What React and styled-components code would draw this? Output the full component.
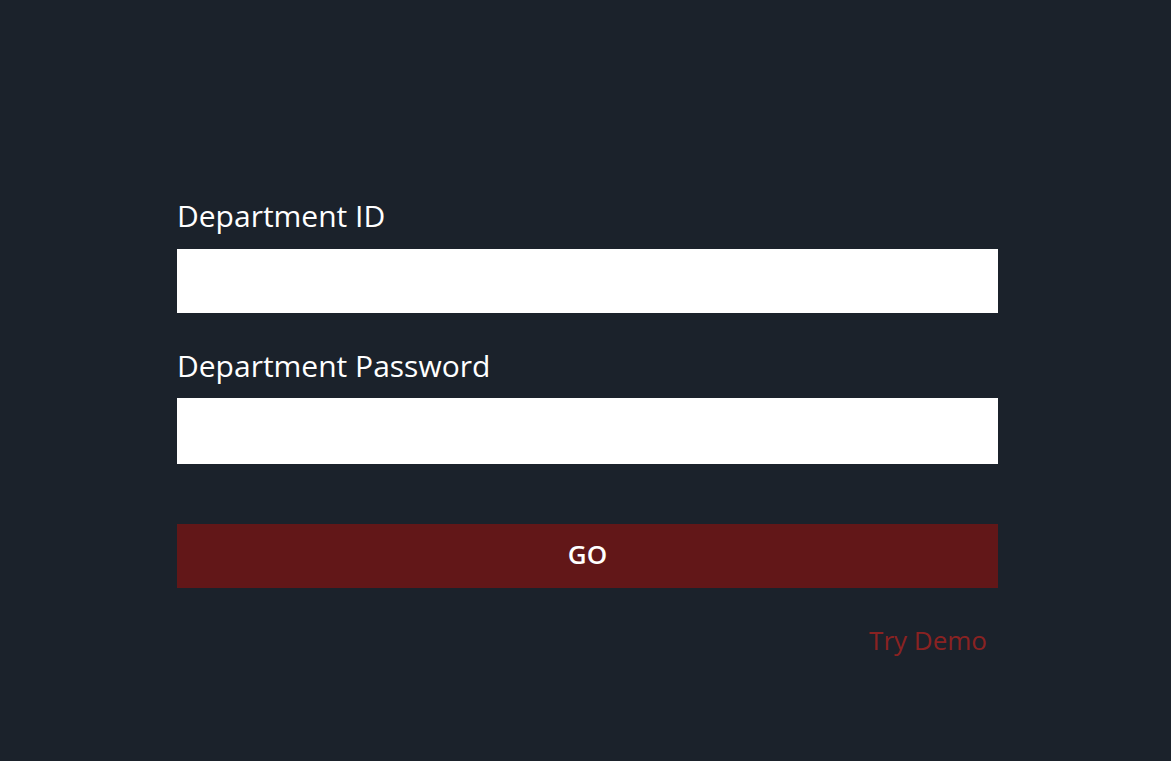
import React from 'react';
import styled, { createGlobalStyle } from 'styled-components';

const GlobalStyle = createGlobalStyle`
  html, body {
    margin: 0;
    padding: 0;
    background-color: #1b222b;
  }
  body {
    font-family: "Open Sans", "Noto Sans", sans-serif;
  }
`;

const Page = styled.div`
  min-height: 761px;
  background-color: #1b222b;
  padding: 198px 173px 0 177px;
  box-sizing: border-box;
`;

const Form = styled.form`
  display: flex;
  flex-direction: column;
  width: 821px;
`;

const Label = styled.label`
  color: #ffffff;
  font-size: 30px;
  line-height: 36px;
  margin-bottom: ${(p) => p.gap || 15}px;
`;

const Input = styled.input`
  height: ${(p) => p.h || 64}px;
  border: none;
  outline: none;
  background: #ffffff;
  padding: 0 12px;
  box-sizing: border-box;
  font-size: 20px;
  margin-bottom: ${(p) => p.after || 0}px;
`;

const Button = styled.button`
  height: 64px;
  border: none;
  background-color: #621718;
  color: #ffffff;
  font-family: inherit;
  font-size: 26px;
  font-weight: 600;
  line-height: 1;
  padding: 0 0 4px;
  cursor: pointer;
`;

const DemoRow = styled.div`
  display: flex;
  justify-content: flex-end;
  padding: 34px 11px 0 0;
`;

const DemoLink = styled.a`
  color: #8a2222;
  font-size: 26px;
  line-height: 36px;
  text-decoration: none;
  cursor: pointer;
`;

const App = () => {
  return (
    <Page>
      <GlobalStyle />
      <Form onSubmit={(e) => e.preventDefault()}>
        <Label gap={15}>Department ID</Label>
        <Input type="text" h={64} after={35} />
        <Label gap={14}>Department Password</Label>
        <Input type="password" h={66} after={60} />
        <Button type="submit">GO</Button>
        <DemoRow>
          <DemoLink>Try Demo</DemoLink>
        </DemoRow>
      </Form>
    </Page>
  );
};

export default App;
